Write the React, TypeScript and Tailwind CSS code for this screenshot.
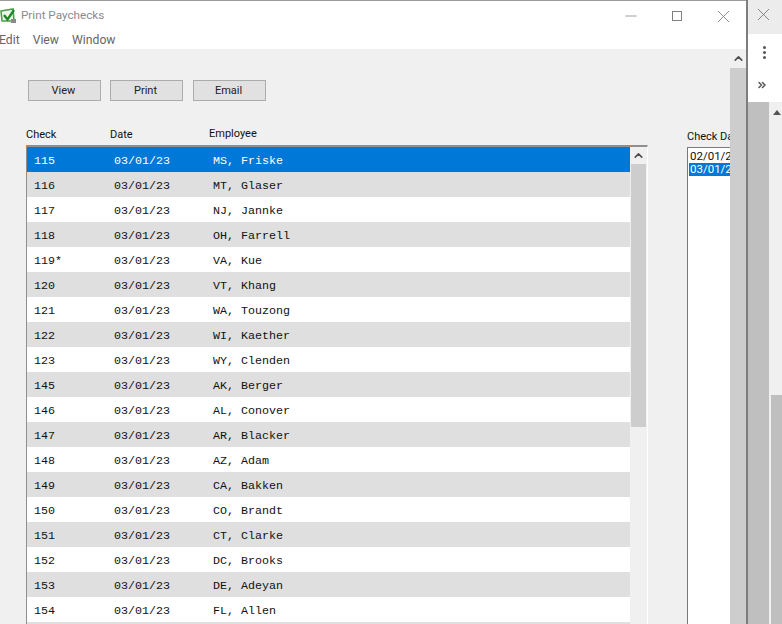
import { ChevronUp, ChevronsRight, Minus, X } from "lucide-react";

const rows = [
  ["115", "MS, Friske"],
  ["116", "MT, Glaser"],
  ["117", "NJ, Jannke"],
  ["118", "OH, Farrell"],
  ["119*", "VA, Kue"],
  ["120", "VT, Khang"],
  ["121", "WA, Touzong"],
  ["122", "WI, Kaether"],
  ["123", "WY, Clenden"],
  ["145", "AK, Berger"],
  ["146", "AL, Conover"],
  ["147", "AR, Blacker"],
  ["148", "AZ, Adam"],
  ["149", "CA, Bakken"],
  ["150", "CO, Brandt"],
  ["151", "CT, Clarke"],
  ["152", "DC, Brooks"],
  ["153", "DE, Adeyan"],
  ["154", "FL, Allen"],
];

function AppIcon() {
  return (
    <svg width="17" height="17" viewBox="0 0 17 17" className="shrink-0">
      <path d="M1 4 L13 2 L14 14 L2 14 Z" fill="#eef5ea" stroke="#4aa04a" strokeWidth="1.6" />
      <path d="M4 8 L7.5 12.5 L14 3" fill="none" stroke="#1c8a2c" strokeWidth="2.4" />
      <rect x="11" y="12" width="5" height="4" fill="#8a8a8a" />
    </svg>
  );
}

function ActionButton({ label }: { label: string }) {
  return (
    <button className="h-[21px] w-[73px] border border-[#acacac] bg-[#e1e1e1] pr-[2px] pt-[2px] text-[11px] text-[#222] last:ml-px">
      {label}
    </button>
  );
}

function Row({ check, name, index }: { check: string; name: string; index: number }) {
  const bg = index === 0 ? "bg-[#0078d7] text-white" : index % 2 === 1 ? "bg-[#dfdfdf] text-[#111]" : "bg-white text-[#111]";
  return (
    <div className={`flex h-[25px] shrink-0 items-center pl-[7px] pt-[4px] ${bg}`}>
      <span className="w-[80px]">{check}</span>
      <span className="w-[99px]">03/01/23</span>
      <span>{name}</span>
    </div>
  );
}

export default function App() {
  return (
    <div className="flex h-[624px] w-[782px] overflow-hidden bg-white font-['Roboto','Open_Sans',sans-serif]">
      <div className="flex h-full w-[746px] shrink-0 flex-col border-t border-[#9a9a9a]">
        <div className="flex h-[30px] shrink-0 items-center bg-white text-[11.7px] text-[#8a8a8a]">
          <div className="flex items-center gap-[4px]">
            <AppIcon />
            <span>Print Paychecks</span>
          </div>
          <div className="ml-auto flex items-center text-[#808080]">
            <div className="flex w-[46px] justify-center">
              <Minus size={18} strokeWidth={1} />
            </div>
            <div className="flex w-[46px] justify-center">
              <div className="h-[10px] w-[10px] border border-[#808080]" />
            </div>
            <div className="flex w-[46px] justify-center">
              <X size={21} strokeWidth={1} />
            </div>
          </div>
        </div>
        <div className="-ml-px flex h-[18px] shrink-0 items-start gap-[13px] bg-white text-[12.2px] leading-[18px] text-[#666]">
          <span>Edit</span>
          <span>View</span>
          <span>Window</span>
        </div>
        <div className="flex min-h-0 flex-1 bg-[#f0f0f0]">
          <div className="min-w-0 flex-1 overflow-hidden">
            <div className="flex gap-[9px] pl-[28px] pt-[31px]">
              <ActionButton label="View" />
              <ActionButton label="Print" />
              <ActionButton label="Email" />
            </div>
            <div className="mt-[24px] flex">
              <div className="w-[687px] shrink-0 pl-[26px]">
                <div className="flex h-[20px] items-start pt-px text-[11px] leading-[17px] text-[#111]">
                  <span className="w-[84px]">Check</span>
                  <span className="w-[99px]">Date</span>
                  <span className="-mt-px">Employee</span>
                </div>
                <div className="flex w-[622px] border-l border-t-2 border-[#8f8f8f] border-r border-r-white font-['Liberation_Mono',monospace] text-[11.67px]">
                  <div className="flex w-[603px] shrink-0 flex-col">
                    {rows.map((row, index) => (
                      <Row key={row[0]} check={row[0]} name={row[1]} index={index} />
                    ))}
                    <div className="h-[25px] shrink-0 bg-[#dfdfdf]" />
                  </div>
                  <div className="ml-px flex w-[15px] shrink-0 flex-col bg-[#f0f0f0]">
                    <div className="flex h-[17px] items-center justify-center">
                      <ChevronUp size={13} strokeWidth={3} className="text-[#505050]" />
                    </div>
                    <div className="h-[263px] bg-[#cdcdcd]" />
                  </div>
                </div>
              </div>
              <div className="min-w-0 flex-1 pt-[5px]">
                <div className="h-[13px] whitespace-nowrap text-[11px] leading-[13px] text-[#111]">Check Date</div>
                <div className="mt-[4px] h-[600px] w-[80px] border-l border-t border-[#7a7a7a] bg-white pl-px pt-[2px] text-[11.5px] leading-[13px] text-[#111]">
                  <div className="pl-px">02/01/23</div>
                  <div className="bg-[#0078d7] pl-px text-white">03/01/23</div>
                </div>
              </div>
            </div>
          </div>
          <div className="flex w-[16px] shrink-0 flex-col bg-[#cdcdcd]">
            <div className="flex h-[19px] items-center justify-center bg-[#f0f0f0]">
              <ChevronUp size={13} strokeWidth={3} className="text-[#505050]" />
            </div>
          </div>
        </div>
      </div>
      <div className="w-[2px] shrink-0 bg-[#7d7d80]" />
      <div className="flex min-w-0 flex-1 flex-col">
        <div className="flex h-[34px] shrink-0 items-center justify-center bg-[#ececec] pb-[5px] pr-[3px]">
          <X size={21} strokeWidth={1} className="text-[#777]" />
        </div>
        <div className="flex h-[68px] shrink-0 flex-col items-center bg-white pr-[2px] pt-[12px]">
          <div className="flex flex-col gap-[2px]">
            <span className="h-[3px] w-[3px] rounded-full bg-[#555]" />
            <span className="h-[3px] w-[3px] rounded-full bg-[#555]" />
            <span className="h-[3px] w-[3px] rounded-full bg-[#555]" />
          </div>
          <ChevronsRight size={12} strokeWidth={3} className="mr-[4px] mt-[20px] text-[#555]" />
        </div>
        <div className="flex min-h-0 flex-1">
          <div className="w-[21px] shrink-0 bg-[#bfbfbf]" />
          <div className="flex min-w-0 flex-1 flex-col bg-[#f0f0f0] pl-[2px]">
            <div className="flex h-[293px] shrink-0 justify-center pt-[8px]">
              <div className="h-0 w-0 border-x-[4px] border-b-[5px] border-x-transparent border-b-[#555]" />
            </div>
            <div className="flex-1 bg-[#bfbfbf]" />
          </div>
        </div>
      </div>
    </div>
  );
}
